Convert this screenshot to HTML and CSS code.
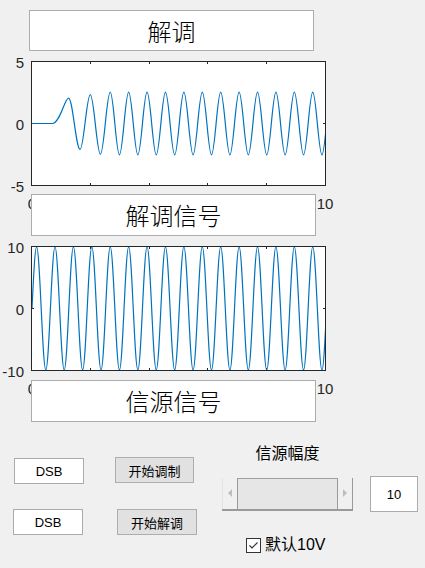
FILE: index.html
```html
<!DOCTYPE html>
<html lang="zh">
<head>
<meta charset="utf-8">
<title>解调</title>
<link rel="stylesheet" href="styles.css">
</head>
<body>
<div class="app">
  <div class="title t1">解调</div>

  <div class="axes a1">
    <svg class="plot" viewBox="0 -5 100 10" preserveAspectRatio="none">
      <path class="ticks" d="M20,-5V-4.8M40,-5V-4.8M60,-5V-4.8M80,-5V-4.8M20,5V4.8M40,5V4.8M60,5V4.8M80,5V4.8M0,0H0.85M100,0H99.15"/>
      <g transform="scale(1,-1)">
        <path class="line" d="M0,0 L6.9,0 C9.6,0 11.1,2.07 12.5,2.07 C13.92,2.07 14.98,-2.1 16.4,-2.1 C17.67,-2.1 18.63,2.35 19.9,2.35 C21.15,2.35 22.1,-2.5 23.35,-2.5 C24.57,-2.5 25.48,2.55 26.704,2.55"/>
        <g transform="translate(26.704,0) scale(1,2.55)">
          <path class="line" d="M0,1 c0.5685,0 1.0585,-0.4877 1.5708,-1 s1.0023,-1 1.5708,-1 s1.0585,0.4877 1.5708,1 s1.0023,1 1.5708,1
          s1.0585,-0.4877 1.5708,-1 s1.0023,-1 1.5708,-1 s1.0585,0.4877 1.5708,1 s1.0023,1 1.5708,1
          s1.0585,-0.4877 1.5708,-1 s1.0023,-1 1.5708,-1 s1.0585,0.4877 1.5708,1 s1.0023,1 1.5708,1
          s1.0585,-0.4877 1.5708,-1 s1.0023,-1 1.5708,-1 s1.0585,0.4877 1.5708,1 s1.0023,1 1.5708,1
          s1.0585,-0.4877 1.5708,-1 s1.0023,-1 1.5708,-1 s1.0585,0.4877 1.5708,1 s1.0023,1 1.5708,1
          s1.0585,-0.4877 1.5708,-1 s1.0023,-1 1.5708,-1 s1.0585,0.4877 1.5708,1 s1.0023,1 1.5708,1
          s1.0585,-0.4877 1.5708,-1 s1.0023,-1 1.5708,-1 s1.0585,0.4877 1.5708,1 s1.0023,1 1.5708,1
          s1.0585,-0.4877 1.5708,-1 s1.0023,-1 1.5708,-1 s1.0585,0.4877 1.5708,1 s1.0023,1 1.5708,1
          s1.0585,-0.4877 1.5708,-1 s1.0023,-1 1.5708,-1 s1.0585,0.4877 1.5708,1 s1.0023,1 1.5708,1
          s1.0585,-0.4877 1.5708,-1 s1.0023,-1 1.5708,-1 s1.0585,0.4877 1.5708,1 s1.0023,1 1.5708,1
          s1.0585,-0.4877 1.5708,-1 s1.0023,-1 1.5708,-1 s1.0585,0.4877 1.5708,1 s1.0023,1 1.5708,1
          s1.0585,-0.4877 1.5708,-1 s1.0023,-1 1.5708,-1 s1.0585,0.4877 1.5708,1"/>
        </g>
      </g>
    </svg>
    <span class="yl y-top">5</span>
    <span class="yl y-mid">0</span>
    <span class="yl y-bot">-5</span>
    <span class="xl x0">0</span>
    <span class="xl x10">10</span>
  </div>

  <div class="title t2">解调信号</div>

  <div class="axes a2">
    <svg class="plot" viewBox="0 -10 100 20" preserveAspectRatio="none">
      <path class="ticks" d="M20,-10V-9.6M40,-10V-9.6M60,-10V-9.6M80,-10V-9.6M20,10V9.6M40,10V9.6M60,10V9.6M80,10V9.6M0,0H0.85M100,0H99.15"/>
      <g transform="scale(1,-10)">
        <path class="line" d="M0,0 c0.5123,0.5123 1.0023,1 1.5708,1
        s1.0585,-0.4877 1.5708,-1 s1.0023,-1 1.5708,-1 s1.0585,0.4877 1.5708,1 s1.0023,1 1.5708,1
        s1.0585,-0.4877 1.5708,-1 s1.0023,-1 1.5708,-1 s1.0585,0.4877 1.5708,1 s1.0023,1 1.5708,1
        s1.0585,-0.4877 1.5708,-1 s1.0023,-1 1.5708,-1 s1.0585,0.4877 1.5708,1 s1.0023,1 1.5708,1
        s1.0585,-0.4877 1.5708,-1 s1.0023,-1 1.5708,-1 s1.0585,0.4877 1.5708,1 s1.0023,1 1.5708,1
        s1.0585,-0.4877 1.5708,-1 s1.0023,-1 1.5708,-1 s1.0585,0.4877 1.5708,1 s1.0023,1 1.5708,1
        s1.0585,-0.4877 1.5708,-1 s1.0023,-1 1.5708,-1 s1.0585,0.4877 1.5708,1 s1.0023,1 1.5708,1
        s1.0585,-0.4877 1.5708,-1 s1.0023,-1 1.5708,-1 s1.0585,0.4877 1.5708,1 s1.0023,1 1.5708,1
        s1.0585,-0.4877 1.5708,-1 s1.0023,-1 1.5708,-1 s1.0585,0.4877 1.5708,1 s1.0023,1 1.5708,1
        s1.0585,-0.4877 1.5708,-1 s1.0023,-1 1.5708,-1 s1.0585,0.4877 1.5708,1 s1.0023,1 1.5708,1
        s1.0585,-0.4877 1.5708,-1 s1.0023,-1 1.5708,-1 s1.0585,0.4877 1.5708,1 s1.0023,1 1.5708,1
        s1.0585,-0.4877 1.5708,-1 s1.0023,-1 1.5708,-1 s1.0585,0.4877 1.5708,1 s1.0023,1 1.5708,1
        s1.0585,-0.4877 1.5708,-1 s1.0023,-1 1.5708,-1 s1.0585,0.4877 1.5708,1 s1.0023,1 1.5708,1
        s1.0585,-0.4877 1.5708,-1 s1.0023,-1 1.5708,-1 s1.0585,0.4877 1.5708,1 s1.0023,1 1.5708,1
        s1.0585,-0.4877 1.5708,-1 s1.0023,-1 1.5708,-1 s1.0585,0.4877 1.5708,1 s1.0023,1 1.5708,1
        s1.0585,-0.4877 1.5708,-1 s1.0023,-1 1.5708,-1 s1.0585,0.4877 1.5708,1 s1.0023,1 1.5708,1
        s1.0585,-0.4877 1.5708,-1 s1.0023,-1 1.5708,-1 s1.0585,0.4877 1.5708,1"/>
      </g>
    </svg>
    <span class="yl y-top">10</span>
    <span class="yl y-mid">0</span>
    <span class="yl y-bot">-10</span>
    <span class="xl x0">0</span>
    <span class="xl x10">10</span>
  </div>

  <div class="title t3">信源信号</div>

  <div class="controls">
    <div class="col col-left">
      <div class="edit dsb1">DSB</div>
      <div class="edit dsb2">DSB</div>
    </div>
    <div class="col col-mid">
      <div class="btn b1">开始调制</div>
      <div class="btn b2">开始解调</div>
    </div>
    <div class="col col-right">
      <div class="amp-label">信源幅度</div>
      <div class="slider-row">
        <div class="slider">
          <div class="sb sb-left"><span class="arrow arrow-left"></span></div>
          <div class="track"></div>
          <div class="sb sb-right"><span class="arrow arrow-right"></span></div>
        </div>
        <div class="edit val">10</div>
      </div>
      <div class="check-row">
        <span class="checkbox">
          <svg viewBox="0 0 13 13" width="13" height="13"><polyline points="2.5,6.5 5,9 10.5,3.5" fill="none" stroke="#333" stroke-width="1.2"/></svg>
        </span>
        <span class="check-text">默认10V</span>
      </div>
    </div>
  </div>
</div>
</body>
</html>
```

FILE: styles.css
```css
* { box-sizing: border-box; }

html, body {
  margin: 0;
  padding: 0;
}

body {
  background: #f0f0f0;
  width: 425px;
  height: 568px;
  overflow: hidden;
  font-family: "Liberation Sans", "Noto Sans CJK SC", sans-serif;
  color: #000;
}

.app {
  padding-top: 10px;
}

/* text label boxes */
.title {
  position: relative;
  z-index: 1;
  display: flex;
  align-items: center;
  justify-content: center;
  width: 285px;
  height: 42px;
  margin-left: 31px;
  background: #fff;
  border: 1px solid #acacac;
  font-family: "Noto Sans CJK SC", sans-serif;
  font-weight: 300;
  font-size: 24px;
  line-height: 1;
  color: #000;
}

.t1 { margin-left: 29px; height: 41px; }
.t2 { margin-top: 8px; }
.t3 { margin-top: 9px; }

/* axes */
.axes {
  position: relative;
  width: 295px;
  height: 125px;
  margin-left: 31px;
  background: #fff;
  border: 1px solid #262626;
}

.a1 { margin-top: 10px; }
.a2 { margin-top: 10px; }

.plot {
  display: block;
  width: 100%;
  height: 100%;
}

.plot .line {
  fill: none;
  stroke: #0072bd;
  stroke-width: 1.2px;
  vector-effect: non-scaling-stroke;
  stroke-linejoin: round;
}

.plot .ticks {
  fill: none;
  stroke: #262626;
  stroke-width: 1px;
  vector-effect: non-scaling-stroke;
  shape-rendering: crispEdges;
}

.yl,
.xl {
  position: absolute;
  font-family: "Liberation Sans", Arial, sans-serif;
  font-size: 15px;
  line-height: 16px;
  color: #262626;
  white-space: nowrap;
}

.yl { right: calc(100% + 8px); }
.y-top { top: -7px; }
.y-mid { top: 55px; }
.y-bot { top: 117px; }

.xl {
  top: calc(100% + 11px);
  transform: translateX(-50%);
}
.x0 { left: 0; }
.x10 { left: 100%; }

/* controls */
.controls {
  display: flex;
  align-items: flex-start;
}

.col {
  display: flex;
  flex-direction: column;
  align-items: flex-start;
}

.col-left { margin-left: 13px; }
.col-mid { margin-left: 31px; }
.col-right { margin-left: 25px; }

.edit {
  display: flex;
  align-items: center;
  justify-content: center;
  background: #fff;
  border: 1px solid #ababab;
  font-size: 13px;
  line-height: 1;
}

.dsb1 { width: 70px; height: 26px; margin-top: 36px; margin-left: 1px; }
.dsb2 { width: 70px; height: 26px; margin-top: 25px; }

.btn {
  display: flex;
  align-items: center;
  justify-content: center;
  height: 26px;
  background: #e1e1e1;
  border: 1px solid #adadad;
  font-family: "Noto Sans CJK SC", sans-serif;
  font-weight: 400;
  font-size: 13px;
  line-height: 1;
}

.b1 { width: 79px; margin-top: 35px; }
.b2 { width: 80px; margin-top: 26px; margin-left: 2px; }

.amp-label {
  width: 131px;
  margin-top: 22px;
  text-align: center;
  font-family: "Noto Sans CJK SC", sans-serif;
  font-weight: 400;
  font-size: 16px;
  line-height: 16px;
}

.slider-row {
  display: flex;
  align-items: center;
  margin-top: 16px;
}

.slider {
  display: flex;
  width: 131px;
  height: 33px;
  background: #e6e6e6;
  border-bottom: 2px solid #9a9a9a;
}

.sb {
  display: flex;
  align-items: center;
  justify-content: center;
  width: 16px;
  background: #f0f0f0;
  border-left: 1px solid #e3e3e3;
  border-right: 1px solid #9a9a9a;
}

.sb-right {
  border-left: 1px solid #9a9a9a;
}

.track {
  flex: 1;
  border-top: 1px solid #a0a0a0;
}

.arrow {
  width: 0;
  height: 0;
  border-top: 4px solid transparent;
  border-bottom: 4px solid transparent;
}

.arrow-left { border-right: 4px solid #bdbdbd; }
.arrow-right { border-left: 4px solid #bdbdbd; }

.val {
  width: 48px;
  height: 36px;
  margin-left: 17px;
}

.check-row {
  display: flex;
  align-items: center;
  gap: 4px;
  margin-top: 25px;
  padding-left: 24px;
}

.checkbox {
  display: flex;
  align-items: center;
  justify-content: center;
  width: 15px;
  height: 15px;
  background: #fff;
  border: 1px solid #333;
}

.checkbox svg { display: block; }

.check-text {
  font-size: 16px;
  line-height: 16px;
}
```
